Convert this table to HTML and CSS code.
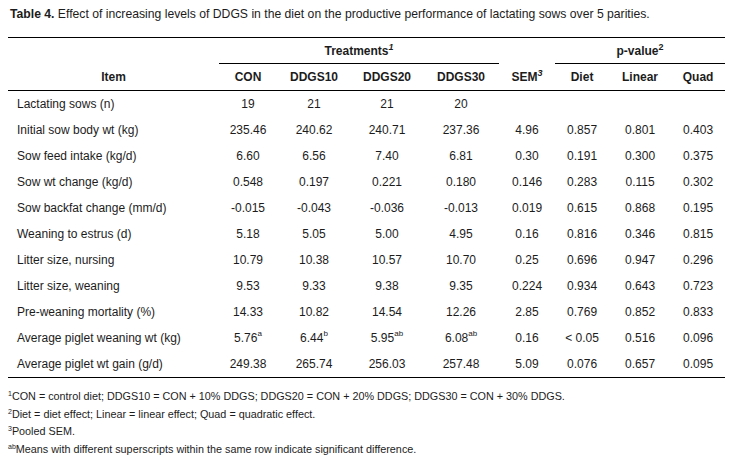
FILE: index.html
```html
<!DOCTYPE html>
<html>
<head>
<meta charset="utf-8">
<link rel="stylesheet" href="styles.css">
</head>
<body>
<div class="page">
  <p class="caption"><b>Table 4.</b> Effect of increasing levels of DDGS in the diet on the productive performance of lactating sows over 5 parities.</p>
  <table class="data">
    <colgroup>
      <col class="c-item"><col class="c-con"><col class="c-d10"><col class="c-d20"><col class="c-d30"><col class="c-sem"><col class="c-diet"><col class="c-lin"><col class="c-quad">
    </colgroup>
    <thead>
      <tr class="h1">
        <th></th>
        <th colspan="4" class="group">Treatments<sup>1</sup></th>
        <th></th>
        <th colspan="3" class="group">p-value<sup class="up">2</sup></th>
      </tr>
      <tr class="h2">
        <th>Item</th>
        <th>CON</th>
        <th>DDGS10</th>
        <th>DDGS20</th>
        <th>DDGS30</th>
        <th>SEM<sup>3</sup></th>
        <th>Diet</th>
        <th>Linear</th>
        <th>Quad</th>
      </tr>
    </thead>
    <tbody>
      <tr><td>Lactating sows (n)</td><td>19</td><td>21</td><td>21</td><td>20</td><td></td><td></td><td></td><td></td></tr>
      <tr><td>Initial sow body wt (kg)</td><td>235.46</td><td>240.62</td><td>240.71</td><td>237.36</td><td>4.96</td><td>0.857</td><td>0.801</td><td>0.403</td></tr>
      <tr><td>Sow feed intake (kg/d)</td><td>6.60</td><td>6.56</td><td>7.40</td><td>6.81</td><td>0.30</td><td>0.191</td><td>0.300</td><td>0.375</td></tr>
      <tr><td>Sow wt change (kg/d)</td><td>0.548</td><td>0.197</td><td>0.221</td><td>0.180</td><td>0.146</td><td>0.283</td><td>0.115</td><td>0.302</td></tr>
      <tr><td>Sow backfat change (mm/d)</td><td>-0.015</td><td>-0.043</td><td>-0.036</td><td>-0.013</td><td>0.019</td><td>0.615</td><td>0.868</td><td>0.195</td></tr>
      <tr><td>Weaning to estrus (d)</td><td>5.18</td><td>5.05</td><td>5.00</td><td>4.95</td><td>0.16</td><td>0.816</td><td>0.346</td><td>0.815</td></tr>
      <tr><td>Litter size, nursing</td><td>10.79</td><td>10.38</td><td>10.57</td><td>10.70</td><td>0.25</td><td>0.696</td><td>0.947</td><td>0.296</td></tr>
      <tr><td>Litter size, weaning</td><td>9.53</td><td>9.33</td><td>9.38</td><td>9.35</td><td>0.224</td><td>0.934</td><td>0.643</td><td>0.723</td></tr>
      <tr><td>Pre-weaning mortality (%)</td><td>14.33</td><td>10.82</td><td>14.54</td><td>12.26</td><td>2.85</td><td>0.769</td><td>0.852</td><td>0.833</td></tr>
      <tr><td>Average piglet weaning wt (kg)</td><td>5.76<sup class="sm">a</sup></td><td>6.44<sup class="sm">b</sup></td><td>5.95<sup class="sm">ab</sup></td><td>6.08<sup class="sm">ab</sup></td><td>0.16</td><td>&lt; 0.05</td><td>0.516</td><td>0.096</td></tr>
      <tr><td>Average piglet wt gain (g/d)</td><td>249.38</td><td>265.74</td><td>256.03</td><td>257.48</td><td>5.09</td><td>0.076</td><td>0.657</td><td>0.095</td></tr>
    </tbody>
  </table>
  <div class="notes">
    <p><sup>1</sup>CON = control diet; DDGS10 = CON + 10% DDGS; DDGS20 = CON + 20% DDGS; DDGS30 = CON + 30% DDGS.</p>
    <p><sup>2</sup>Diet = diet effect; Linear = linear effect; Quad = quadratic effect.</p>
    <p><sup>3</sup>Pooled SEM.</p>
    <p><sup>ab</sup>Means with different superscripts within the same row indicate significant difference.</p>
  </div>
</div>
</body>
</html>
```
FILE: styles.css
```css
html, body {
  margin: 0;
  padding: 0;
  background: #ffffff;
}
body {
  font-family: "Liberation Sans", Arial, sans-serif;
  color: #1c1c1c;
}
.page {
  padding: 7px 9px 0 8px;
}
.caption {
  margin: 0 0 0 2px;
  font-size: 12.2px;
  line-height: 14px;
}
.caption b {
  font-weight: bold;
}
.data {
  margin-top: 16px;
  width: 717px;
  border-collapse: collapse;
  table-layout: fixed;
  font-size: 12px;
  border-top: 1px solid #000;
  border-bottom: 1px solid #000;
}
.c-item { width: 211px; }
.c-con { width: 58px; }
.c-d10 { width: 74px; }
.c-d20 { width: 72px; }
.c-d30 { width: 76px; }
.c-sem { width: 56px; }
.c-diet { width: 54px; }
.c-lin { width: 62px; }
.c-quad { width: 54px; }

.data th, .data td {
  padding: 0;
  text-align: center;
  white-space: nowrap;
}
.data th {
  font-weight: bold;
}
.h1 th {
  height: 25px;
}
.h1 th.group {
  border-bottom: 1px solid #000;
}
.h2 th {
  height: 26px;
  border-bottom: 1px solid #000;
}
.data tbody td {
  height: 26px;
}
.data tbody td:first-child {
  text-align: left;
  padding-left: 9px;
}
.data sup {
  font-size: 9px;
  font-style: italic;
  line-height: 0;
  vertical-align: 5px;
}
.data sup.up {
  font-style: normal;
}
.data sup.sm {
  font-style: normal;
  font-size: 8px;
  vertical-align: 6px;
}
.notes {
  margin-top: 10px;
  font-size: 10.8px;
}
.notes p {
  margin: 0;
  line-height: 17.7px;
}
.notes sup {
  font-size: 7px;
  line-height: 0;
  vertical-align: 4px;
}
```
